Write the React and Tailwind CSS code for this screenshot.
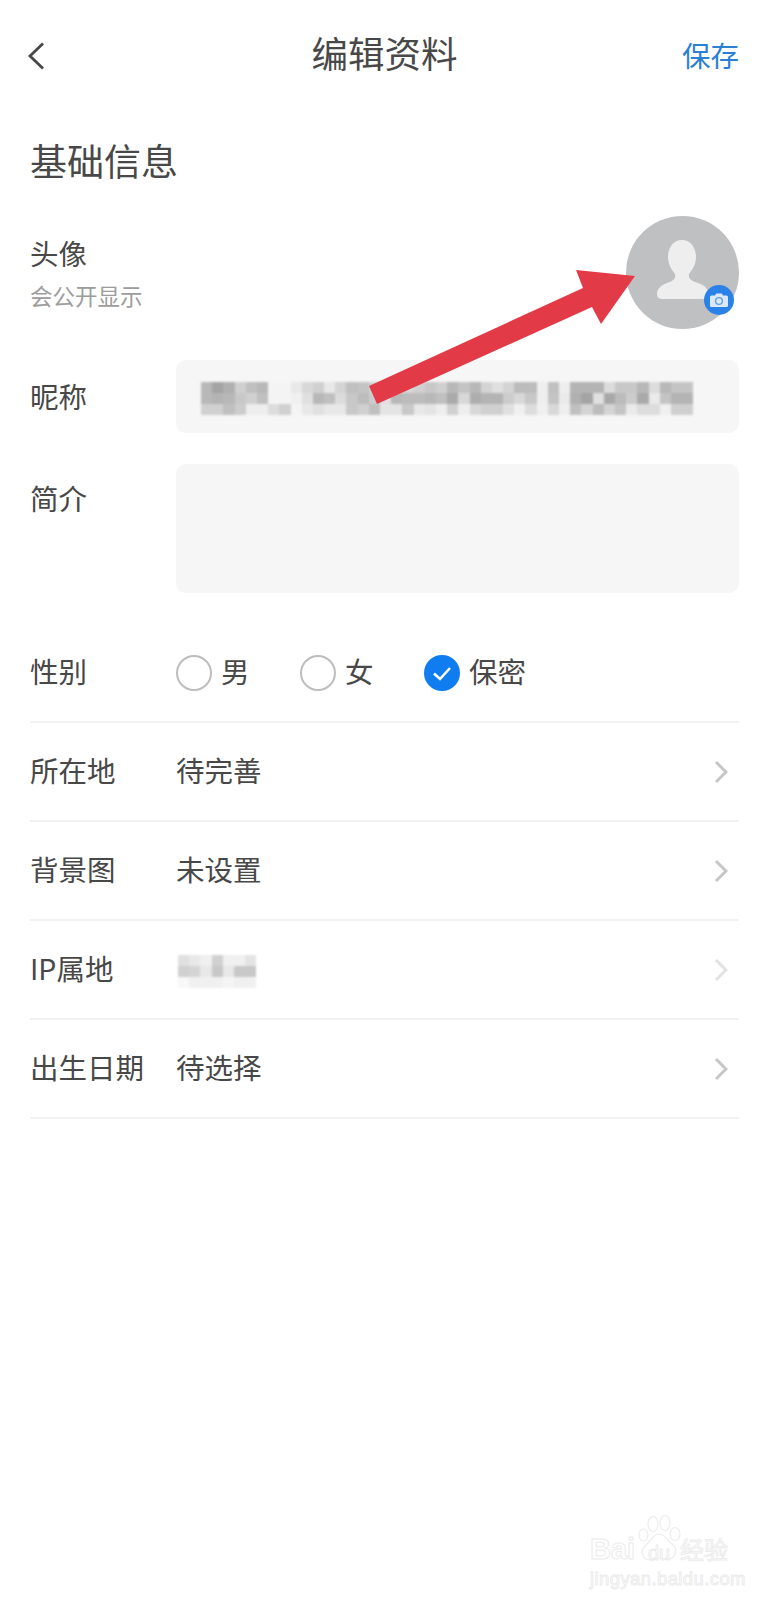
import React from "react";

const nick = [
  "b8 a4 b0 d0 c0 b8 f4 f4 e8 d8 d0 e8 d4 c0 c4 d0 d8 e0 d8 d0 c8 d0 b8 c4 b8 d4 e0 d4 bc bc ee c0 ee b4 b4 b4 dc c8 c8 b8 dc b8 c4 c4",
  "b8 b4 b8 c8 d0 c0 f4 f4 f0 e0 b8 c0 dc c8 bc cc e0 b8 bc bc b8 c0 aa d8 ae b4 b4 cc d8 c8 ee c4 ea b0 a4 e0 a8 bc cc aa ea c4 b4 b4",
  "d0 d0 c0 cc ee ee dc d0 f4 e8 e0 e8 e8 c8 d0 c0 e4 e4 c8 e8 e4 ee d0 ee d8 d0 d0 e0 f0 dc f0 d8 ee c0 d4 bc d4 c4 ea dc dc f0 cf cf",
].map((r) => r.split(" "));

const ip = [
  "e0 e8 f0 d0 f0 f0 e4".split(" "),
  "d0 d4 e8 c8 e8 c8 c8".split(" "),
  "f8 f0 f0 f0 f4 f0 f0".split(" "),
];

function Mosaic({ data, cols }) {
  return (
    <div className={`grid ${cols} auto-rows-[11px] blur-[1px]`}>
      {data.flat().map((c, i) => (
        <div key={i} style={{ backgroundColor: `#${c}${c}${c}` }} />
      ))}
    </div>
  );
}

function Chevron({ color = "#c6c6c6" }) {
  return (
    <svg width="14" height="24" viewBox="0 0 14 24" fill="none" stroke={color} strokeWidth="3">
      <path d="M2 2 L12 12 L2 22" />
    </svg>
  );
}

function Row({ label, value, chevron }) {
  return (
    <div className="h-[99px] flex items-center border-b-2 border-[#f1f1f1]">
      <div className="w-[146px] shrink-0 pb-[3px]">{label}</div>
      <div className="flex-1 pb-[3px]">{value}</div>
      <div className="mr-[11px] flex"><Chevron color={chevron} /></div>
    </div>
  );
}

function Radio({ checked, label, widthClass }) {
  return (
    <div className={`flex items-center gap-[9px] ${widthClass}`}>
      {checked ? (
        <svg width="36" height="36" viewBox="0 0 36 36">
          <circle cx="18" cy="18" r="18" fill="#0f7cf0" />
          <path d="M10 18.5 L16 24 L26 13" fill="none" stroke="#fff" strokeWidth="2.6" />
        </svg>
      ) : (
        <div className="w-9 h-9 rounded-full border-2 border-[#bdbdbd]" />
      )}
      <span className="pb-[3px]">{label}</span>
    </div>
  );
}

export default function App() {
  return (
    <div className="relative w-[769px] h-[1600px] overflow-hidden bg-white px-[30px] text-[28.5px] leading-[40px] text-[#484848] font-['Noto_Sans_CJK_SC','Noto_Sans',sans-serif]">
      {/* header */}
      <div className="h-[110px] flex items-center pb-[4px]">
        <div className="flex-1 flex pt-[5px]">
          <svg className="-ml-[3px]" width="18" height="28" viewBox="0 0 18 28" fill="none" stroke="#484848" strokeWidth="2.8">
            <path d="M16 1.5 L3 14 L16 26.5" />
          </svg>
        </div>
        <div className="text-[36.5px] leading-[50px]">编辑资料</div>
        <div className="flex-1 text-right text-[#2b80d2] pt-[3px]">保存</div>
      </div>

      <div className="h-[106px] pt-[25px] text-[37px] leading-[50px]">基础信息</div>

      {/* avatar */}
      <div className="h-[113px] flex justify-between">
        <div className="pt-[17px]">
          <div>头像</div>
          <div className="mt-[7px] text-[22.5px] leading-[30px] text-[#9c9c9c]">会公开显示</div>
        </div>
        <div className="relative w-[113px] h-[113px] rounded-full bg-[#bfc0c2]">
          <svg width="113" height="113" viewBox="0 0 113 113" fill="#eeeeef">
            <path d="M56 24 C65 24 70 32 70 41 C70 49 66 54 63 58 C62 63 66 65 72 67 C78 69 82 72 82 78 C82 82 79 83 75 83 L37 83 C33 83 31 82 31 78 C31 72 36 69 41 67 C47 65 50 63 49 58 C46 54 42 49 42 41 C42 32 47 24 56 24Z" />
          </svg>
          <div className="absolute left-[78px] top-[69px] w-[30px] h-[30px] rounded-full bg-[#2b82e6] flex items-center justify-center">
            <svg width="18" height="14" viewBox="0 0 18 14">
              <path fill="#dbe9fa" d="M1.5 2.5 H5 L6.2 0.5 H11.8 L13 2.5 H16.5 A1.5 1.5 0 0 1 18 4 V12.5 A1.5 1.5 0 0 1 16.5 14 H1.5 A1.5 1.5 0 0 1 0 12.5 V4 A1.5 1.5 0 0 1 1.5 2.5Z" />
              <circle cx="9" cy="8" r="3.4" fill="none" stroke="#5d9fea" strokeWidth="1.4" />
            </svg>
          </div>
        </div>
      </div>

      {/* nickname */}
      <div className="mt-[31px] flex">
        <div className="w-[146px] shrink-0 pt-[16px]">昵称</div>
        <div className="flex-1 h-[73px] rounded-[10px] bg-[#f6f6f6] pl-[25px] pt-[22px]">
          <Mosaic data={nick} cols="grid-cols-[repeat(44,11.2px)]" />
        </div>
      </div>

      {/* bio */}
      <div className="mt-[31px] flex">
        <div className="w-[146px] shrink-0 pt-[14px]">简介</div>
        <div className="flex-1 h-[129px] rounded-[10px] bg-[#f6f6f6]" />
      </div>

      {/* gender */}
      <div className="h-[130px] pt-[31px] flex items-center border-b-2 border-[#f1f1f1]">
        <div className="w-[146px] shrink-0 pb-[3px]">性别</div>
        <Radio label="男" widthClass="w-[124px]" />
        <Radio label="女" widthClass="w-[124px]" />
        <Radio label="保密" checked />
      </div>

      <Row label="所在地" value="待完善" />
      <Row label="背景图" value="未设置" />
      <Row
        label="IP属地"
        chevron="#e2e2e2"
        value={<div className="w-[79px] ml-[2px] mt-[7px]"><Mosaic data={ip} cols="grid-cols-[repeat(7,11.2px)]" /></div>}
      />
      <Row label="出生日期" value="待选择" />

      {/* annotation arrow */}
      <svg className="absolute left-0 top-0 pointer-events-none" width="769" height="450" viewBox="0 0 769 450">
        <polygon fill="#e23a47" points="369,386 377,404 592,307 601,324 635,276 576,270 583,288" />
      </svg>

      {/* watermark */}
      <div className="absolute left-[590px] top-[1515px] w-[145px] h-[70px] text-white [-webkit-text-stroke:1px_#ececec]">
        <svg className="absolute left-[48px] top-0" width="45" height="50" viewBox="0 0 45 50" fill="none" stroke="#ececec" strokeWidth="1.2">
          <ellipse cx="5.5" cy="20" rx="4.5" ry="6" />
          <ellipse cx="15" cy="9" rx="5" ry="7.5" />
          <ellipse cx="27" cy="8" rx="5" ry="7.5" />
          <ellipse cx="37" cy="19" rx="5" ry="6.5" />
          <path d="M21 19 C27 19 30 26 35 30 C41 36 36 46 27 44 C22 43 19 43 14 45 C4 46 1 36 8 30 C13 26 15 19 21 19Z" />
        </svg>
        <div className="absolute left-0 top-[18px] font-['Liberation_Sans',sans-serif] font-bold text-[29px] leading-[32px]">Bai</div>
        <div className="absolute left-[58px] top-[27px] font-['Liberation_Sans',sans-serif] text-[20px] leading-[22px]">du</div>
        <div className="absolute left-[90px] top-[19px] text-[24px] leading-[30px]">经验</div>
        <div className="absolute left-0 top-[53px] font-['Liberation_Sans',sans-serif] text-[18.5px] leading-[22px] tracking-[0.4px] whitespace-nowrap">jingyan.baidu.com</div>
      </div>
    </div>
  );
}
